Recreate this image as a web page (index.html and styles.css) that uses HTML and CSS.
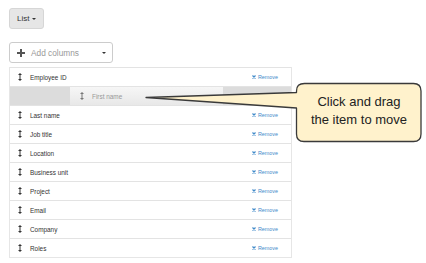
FILE: index.html
```html
<!DOCTYPE html>
<html>
<head>
<meta charset="utf-8">
<link rel="stylesheet" href="styles.css">
</head>
<body>
<div class="page">
  <button class="btn-list">List <span class="caret"></span></button>
  <div class="add-col">
    <svg class="plus" width="8" height="8" viewBox="0 0 8 8"><path d="M3 0h2v3h3v2H5v3H3V5H0V3h3z" fill="#555"/></svg>
    <span class="add-text">Add columns</span>
    <span class="caret"></span>
  </div>
  <ul class="cols">
    <li class="row"><svg class="grip" width="4" height="8" viewBox="0 0 4 8"><path d="M2 0L4 2H2.5V6H4L2 8L0 6H1.5V2H0Z" fill="#333"/></svg><span class="name">Employee ID</span><span class="remove"><svg class="x" width="4" height="4" viewBox="0 0 4 4"><path d="M0.5 0.5L3.5 3.5M3.5 0.5L0.5 3.5" stroke="#428bca" stroke-width="1.2"/></svg>Remove</span></li>
    <li class="placeholder">
      <div class="dragged"><svg class="grip" width="4" height="8" viewBox="0 0 4 8"><path d="M2 0L4 2H2.5V6H4L2 8L0 6H1.5V2H0Z" fill="#777"/></svg><span class="name">First name</span></div>
    </li>
    <li class="row"><svg class="grip" width="4" height="8" viewBox="0 0 4 8"><path d="M2 0L4 2H2.5V6H4L2 8L0 6H1.5V2H0Z" fill="#333"/></svg><span class="name">Last name</span><span class="remove"><svg class="x" width="4" height="4" viewBox="0 0 4 4"><path d="M0.5 0.5L3.5 3.5M3.5 0.5L0.5 3.5" stroke="#428bca" stroke-width="1.2"/></svg>Remove</span></li>
    <li class="row"><svg class="grip" width="4" height="8" viewBox="0 0 4 8"><path d="M2 0L4 2H2.5V6H4L2 8L0 6H1.5V2H0Z" fill="#333"/></svg><span class="name">Job title</span><span class="remove"><svg class="x" width="4" height="4" viewBox="0 0 4 4"><path d="M0.5 0.5L3.5 3.5M3.5 0.5L0.5 3.5" stroke="#428bca" stroke-width="1.2"/></svg>Remove</span></li>
    <li class="row"><svg class="grip" width="4" height="8" viewBox="0 0 4 8"><path d="M2 0L4 2H2.5V6H4L2 8L0 6H1.5V2H0Z" fill="#333"/></svg><span class="name">Location</span><span class="remove"><svg class="x" width="4" height="4" viewBox="0 0 4 4"><path d="M0.5 0.5L3.5 3.5M3.5 0.5L0.5 3.5" stroke="#428bca" stroke-width="1.2"/></svg>Remove</span></li>
    <li class="row"><svg class="grip" width="4" height="8" viewBox="0 0 4 8"><path d="M2 0L4 2H2.5V6H4L2 8L0 6H1.5V2H0Z" fill="#333"/></svg><span class="name">Business unit</span><span class="remove"><svg class="x" width="4" height="4" viewBox="0 0 4 4"><path d="M0.5 0.5L3.5 3.5M3.5 0.5L0.5 3.5" stroke="#428bca" stroke-width="1.2"/></svg>Remove</span></li>
    <li class="row"><svg class="grip" width="4" height="8" viewBox="0 0 4 8"><path d="M2 0L4 2H2.5V6H4L2 8L0 6H1.5V2H0Z" fill="#333"/></svg><span class="name">Project</span><span class="remove"><svg class="x" width="4" height="4" viewBox="0 0 4 4"><path d="M0.5 0.5L3.5 3.5M3.5 0.5L0.5 3.5" stroke="#428bca" stroke-width="1.2"/></svg>Remove</span></li>
    <li class="row"><svg class="grip" width="4" height="8" viewBox="0 0 4 8"><path d="M2 0L4 2H2.5V6H4L2 8L0 6H1.5V2H0Z" fill="#333"/></svg><span class="name">Email</span><span class="remove"><svg class="x" width="4" height="4" viewBox="0 0 4 4"><path d="M0.5 0.5L3.5 3.5M3.5 0.5L0.5 3.5" stroke="#428bca" stroke-width="1.2"/></svg>Remove</span></li>
    <li class="row"><svg class="grip" width="4" height="8" viewBox="0 0 4 8"><path d="M2 0L4 2H2.5V6H4L2 8L0 6H1.5V2H0Z" fill="#333"/></svg><span class="name">Company</span><span class="remove"><svg class="x" width="4" height="4" viewBox="0 0 4 4"><path d="M0.5 0.5L3.5 3.5M3.5 0.5L0.5 3.5" stroke="#428bca" stroke-width="1.2"/></svg>Remove</span></li>
    <li class="row"><svg class="grip" width="4" height="8" viewBox="0 0 4 8"><path d="M2 0L4 2H2.5V6H4L2 8L0 6H1.5V2H0Z" fill="#333"/></svg><span class="name">Roles</span><span class="remove"><svg class="x" width="4" height="4" viewBox="0 0 4 4"><path d="M0.5 0.5L3.5 3.5M3.5 0.5L0.5 3.5" stroke="#428bca" stroke-width="1.2"/></svg>Remove</span></li>
  </ul>
  <div class="callout">
    <svg class="callout-shape" width="290" height="70" viewBox="0 0 290 70">
      <path d="M159.5 1.5 H268.5 Q276 1.5 276 9 V52 Q276 59.5 268.5 59.5 H159 Q151.5 59.5 151.5 52 V26 L1 15.5 L151.5 10.5 V9 Q151.5 1.5 159.5 1.5 Z" fill="#fff2cc" stroke="#3a3a3a" stroke-width="1.3" stroke-linejoin="round"/>
    </svg>
    <div class="callout-text">Click and drag<br>the item to move</div>
  </div>
</div>
</body>
</html>
```
FILE: styles.css
```css
* { box-sizing: border-box; }
html, body { margin: 0; padding: 0; background: #fff; }
body { font-family: "Liberation Sans", Arial, sans-serif; color: #333; }
.page { position: relative; width: 426px; height: 263px; padding: 8px 0 0 9px; }
.btn-list {
  display: flex; align-items: center; gap: 3px;
  width: 35px; height: 21px; padding: 0 0 0 7px; margin: 0;
  background: #e6e6e6; border: 1px solid #d6d6d6; border-radius: 3px;
  font-family: "Liberation Sans", Arial, sans-serif; font-size: 8px; color: #333;
}
.caret {
  display: inline-block; width: 0; height: 0;
  border-left: 2px solid transparent; border-right: 2px solid transparent;
  border-top: 2px solid #333;
}
.add-col {
  display: flex; align-items: center;
  width: 104px; height: 21px; margin-top: 13px; padding: 0 6px 0 7px;
  border: 1px solid #ccc; border-radius: 3px; background: #fff;
}
.plus { margin-right: 6px; }
.add-text { font-size: 8.3px; color: #999; flex: 1; }
.cols {
  list-style: none; margin: 4px 0 0 0; padding: 0;
  width: 283px; border: 1px solid #e6e6e6; border-top: none;
}
.cols li {
  height: 19px; border-top: 1px solid #e3e3e3;
  display: flex; align-items: center;
}
.row { padding: 0 13px 0 8px; background: #fff; }
.grip { flex: none; margin-right: 8px; }
.name { font-size: 6.4px; color: #333; flex: 1; }
.remove { font-size: 5.4px; color: #428bca; display: flex; align-items: center; gap: 2px; }
.x { flex: none; }
.placeholder { position: relative; background: #dcdcdc; }
.dragged {
  position: absolute; left: 60px; top: 0; width: 153px; height: 18px;
  display: flex; align-items: center; padding-left: 10px;
  background: linear-gradient(#f6f6f6, #e8e8e8);
}
.dragged .name { color: #999; }
.callout { position: absolute; left: 145px; top: 82px; width: 290px; height: 70px; }
.callout-shape { position: absolute; left: 0; top: 0; }
.callout-text {
  position: absolute; left: 152px; top: 11px; width: 124px;
  text-align: center; font-size: 13px; line-height: 18px; color: #222;
  font-family: "Liberation Sans", Arial, sans-serif;
}
```
